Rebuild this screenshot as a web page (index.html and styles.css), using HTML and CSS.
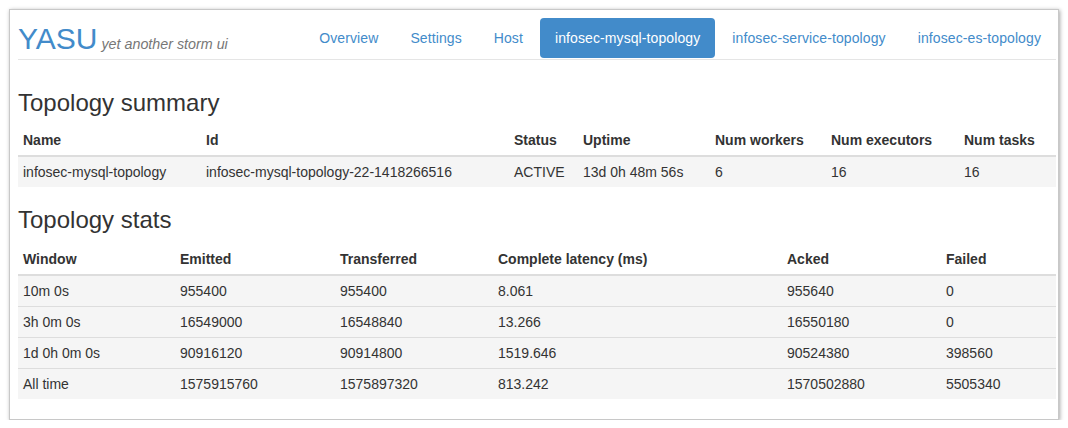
FILE: index.html
```html
<!DOCTYPE html>
<html>
<head>
<meta charset="utf-8">
<title>YASU</title>
<link rel="stylesheet" href="styles.css">
</head>
<body>
<div class="window">
  <div class="header">
    <div class="brand">YASU<small> yet another storm ui</small></div>
    <ul class="nav">
      <li><a href="#">Overview</a></li>
      <li><a href="#">Settings</a></li>
      <li><a href="#">Host</a></li>
      <li class="active"><a href="#">infosec-mysql-topology</a></li>
      <li><a href="#">infosec-service-topology</a></li>
      <li><a href="#">infosec-es-topology</a></li>
    </ul>
  </div>

  <h3 class="title title-first">Topology summary</h3>
  <table class="grid">
    <colgroup>
      <col class="s1"><col class="s2"><col class="s3"><col class="s4"><col class="s5"><col class="s6"><col class="s7">
    </colgroup>
    <thead>
      <tr><th>Name</th><th>Id</th><th>Status</th><th>Uptime</th><th>Num workers</th><th>Num executors</th><th>Num tasks</th></tr>
    </thead>
    <tbody>
      <tr><td>infosec-mysql-topology</td><td>infosec-mysql-topology-22-1418266516</td><td>ACTIVE</td><td>13d 0h 48m 56s</td><td>6</td><td>16</td><td>16</td></tr>
    </tbody>
  </table>

  <h3 class="title title-second">Topology stats</h3>
  <table class="grid">
    <colgroup>
      <col class="t1"><col class="t2"><col class="t3"><col class="t4"><col class="t5"><col class="t6">
    </colgroup>
    <thead>
      <tr><th>Window</th><th>Emitted</th><th>Transferred</th><th>Complete latency (ms)</th><th>Acked</th><th>Failed</th></tr>
    </thead>
    <tbody>
      <tr><td>10m 0s</td><td>955400</td><td>955400</td><td>8.061</td><td>955640</td><td>0</td></tr>
      <tr><td>3h 0m 0s</td><td>16549000</td><td>16548840</td><td>13.266</td><td>16550180</td><td>0</td></tr>
      <tr><td>1d 0h 0m 0s</td><td>90916120</td><td>90914800</td><td>1519.646</td><td>90524380</td><td>398560</td></tr>
      <tr><td>All time</td><td>1575915760</td><td>1575897320</td><td>813.242</td><td>1570502880</td><td>5505340</td></tr>
    </tbody>
  </table>
</div>
</body>
</html>
```
FILE: styles.css
```css
html, body {
  margin: 0;
  padding: 0;
  background: #ffffff;
}

body {
  font-family: "Liberation Sans", Arial, Helvetica, sans-serif;
  font-size: 14px;
  line-height: 20px;
  color: #333333;
}

.window {
  box-sizing: border-box;
  width: 1050px;
  height: 411px;
  margin: 9px 0 0 9px;
  padding: 8px 2px 0 8px;
  border: 1px solid #c8c8c8;
  box-shadow: 1px 1px 4px rgba(0, 0, 0, 0.35);
  background: #ffffff;
  overflow: hidden;
}

.header {
  display: flex;
  justify-content: space-between;
  align-items: flex-start;
  height: 40px;
  padding-bottom: 1px;
  border-bottom: 1px solid #e5e5e5;
}

.brand {
  font-size: 30px;
  line-height: 40px;
  height: 40px;
  padding-top: 1px;
  color: #428bca;
  white-space: nowrap;
}

.brand small {
  font-size: 14.3px;
  line-height: 1;
  font-style: italic;
  color: #777777;
}

.nav {
  display: flex;
  gap: 2px;
  list-style: none;
  margin: 0;
  padding: 0;
}

.nav a {
  display: block;
  padding: 10px 15px;
  border-radius: 4px;
  color: #428bca;
  text-decoration: none;
  white-space: nowrap;
  letter-spacing: 0.1px;
}

.nav .active a {
  background: #428bca;
  color: #ffffff;
}

.title {
  font-size: 24px;
  font-weight: 500;
  line-height: 26.4px;
  margin: 0;
  color: #333333;
}

.title-first {
  margin-top: 30px;
  margin-bottom: 9px;
}

.title-second {
  margin-top: 20px;
  margin-bottom: 10px;
}

.grid {
  width: 100%;
  border-collapse: collapse;
  border-spacing: 0;
  table-layout: fixed;
}

.grid th,
.grid td {
  padding: 5px;
  text-align: left;
  vertical-align: top;
  line-height: 20px;
  white-space: nowrap;
}

.grid th {
  font-weight: bold;
  border-bottom: 2px solid #dddddd;
}

.grid td {
  border-top: 1px solid #dddddd;
  background: #f5f5f5;
}

.s1 { width: 183px; }
.s2 { width: 308px; }
.s3 { width: 69px; }
.s4 { width: 132px; }
.s5 { width: 116px; }
.s6 { width: 133px; }
.s7 { width: 97px; }

.t1 { width: 157px; }
.t2 { width: 160px; }
.t3 { width: 158px; }
.t4 { width: 289px; }
.t5 { width: 159px; }
.t6 { width: 115px; }
```
